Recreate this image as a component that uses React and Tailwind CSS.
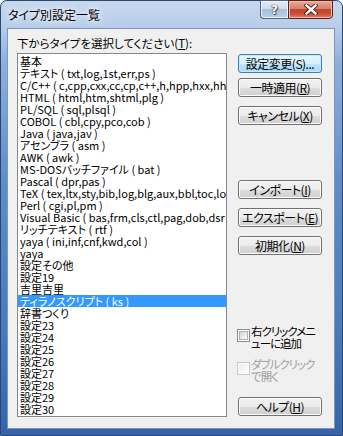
const items = [
  "基本",
  "テキスト ( txt,log,1st,err,ps )",
  "C/C++ ( c,cpp,cxx,cc,cp,c++,h,hpp,hxx,hh,",
  "HTML ( html,htm,shtml,plg )",
  "PL/SQL ( sql,plsql )",
  "COBOL ( cbl,cpy,pco,cob )",
  "Java ( java,jav )",
  "アセンブラ ( asm )",
  "AWK ( awk )",
  "MS-DOSバッチファイル ( bat )",
  "Pascal ( dpr,pas )",
  "TeX ( tex,ltx,sty,bib,log,blg,aux,bbl,toc,lof,",
  "Perl ( cgi,pl,pm )",
  "Visual Basic ( bas,frm,cls,ctl,pag,dob,dsr",
  "リッチテキスト ( rtf )",
  "yaya ( ini,inf,cnf,kwd,col )",
  "yaya",
  "設定その他",
  "設定19",
  "吉里吉里",
  "ティラノスクリプト ( ks )",
  "辞書つくり",
  "設定23",
  "設定24",
  "設定25",
  "設定26",
  "設定27",
  "設定28",
  "設定29",
  "設定30",
];

const SELECTED = 20;

function Btn({ children, className = "", primary = false }) {
  return (
    <div
      className={
        "h-[19px] w-[84px] flex items-center justify-center rounded-[3px] border whitespace-nowrap tracking-[-0.5px] " +
        (primary
          ? "border-[#3c7fb1] bg-[linear-gradient(180deg,#eaf6fd_0%,#d9f0fc_50%,#bee6fd_51%,#a7d9f5_100%)] shadow-[inset_0_0_0_1px_#c4e9fd] "
          : "border-[#707070] bg-[linear-gradient(180deg,#f2f2f2_0%,#ebebeb_50%,#dddddd_51%,#cfcfcf_100%)] shadow-[inset_0_0_0_1px_#fcfcfc] ") +
        className
      }
    >
      {children}
    </div>
  );
}

function Check({ disabled = false, lines, className = "" }) {
  return (
    <div className={"flex items-start ml-[-1px] " + className}>
      <div
        className={
          "mt-[4px] w-[13px] h-[13px] shrink-0 border p-[1px] " +
          (disabled ? "border-[#c8c8c8] bg-[#fafafa]" : "border-[#8e8f8f] bg-white")
        }
      >
        <div
          className={
            "w-full h-full " +
            (disabled
              ? "bg-[linear-gradient(135deg,#eeeeee,#fbfbfb)]"
              : "bg-[linear-gradient(135deg,#d3d3d3,#fbfbfb)] border border-[#b0b0b0]")
          }
        />
      </div>
      <div
        className={
          "ml-[1px] text-[11.5px] leading-[12px] whitespace-nowrap tracking-[-1px] " +
          (disabled ? "text-[#a0a0a0]" : "text-black")
        }
      >
        {lines.map((l) => (
          <div key={l}>{l}</div>
        ))}
      </div>
    </div>
  );
}

export default function App() {
  return (
    <div className="w-[343px] h-[436px] text-[12px] leading-[12px] text-black font-['Noto_Sans_CJK_JP',sans-serif] [font-feature-settings:'palt']">
      <div className="w-full h-full flex flex-col border border-[#2a4870] rounded-t-[7px] bg-[linear-gradient(180deg,#c6d9ef_0px,#b8cdea_26px,#8fb0dc_60px,#5f8dca_180px,#4a7bbf_320px,#3563aa_436px)]">
        {/* タイトルバー */}
        <div className="h-[27px] flex items-start justify-between">
          <div className="pl-[7px] pt-[8px] text-[12px] leading-[12px] [text-shadow:0_0_5px_#ffffff,0_0_8px_#ffffff]">
            タイプ別設定一覧
          </div>
          <div className="flex mr-[9px] mt-[-1px]">
            <div className="w-[28px] h-[19px] flex items-center justify-center rounded-bl-[4px] border border-r-0 border-[#4e6580] bg-[linear-gradient(180deg,#e4ecf6_0%,#cfdcec_45%,#a9bfda_50%,#bcd0e6_100%)] shadow-[inset_0_0_0_1px_#eef3fa]">
              <span className="text-white font-bold text-[12px] leading-[12px] font-['DejaVu_Sans',sans-serif] [text-shadow:0_0_1px_#333,0_0_1px_#333,1px_1px_1px_#555]">
                ?
              </span>
            </div>
            <div className="w-[45px] h-[19px] flex items-center justify-center rounded-br-[4px] border border-[#5a2218] bg-[linear-gradient(180deg,#e8ad9f_0%,#d6806e_45%,#c4432d_50%,#cf4f3a_78%,#e3866a_100%)] shadow-[inset_0_0_0_1px_#f0b9ab]">
              <svg width="14" height="11" viewBox="0 0 14 11">
                <path d="M2.5 1.5 L11.5 9.5 M11.5 1.5 L2.5 9.5" stroke="#4a1a12" strokeWidth="4.2" strokeLinecap="square" />
                <path d="M2.5 1.5 L11.5 9.5 M11.5 1.5 L2.5 9.5" stroke="#ffffff" strokeWidth="2.4" strokeLinecap="square" />
              </svg>
            </div>
          </div>
        </div>

        {/* クライアント領域 */}
        <div className="flex-1 ml-[6px] mr-[7px] mb-[6px] border border-[#7e96b6] bg-[#f0f0f0] flex">
          <div className="pl-[9px] pt-[8px] w-[219px]">
            <div className="whitespace-nowrap text-[11.5px]">
              下からタイプを選択してください(<span className="underline">T</span>):
            </div>
            <div className="mt-[4px] w-[210px] h-[364px] border border-[#828790] bg-white pt-[1px] overflow-hidden text-[11px]">
              {items.map((it, i) => (
                <div
                  key={i}
                  className={
                    "h-[12px] leading-[12px] pl-[2px] whitespace-nowrap " +
                    (i === SELECTED ? "bg-[#3399ff] text-white" : "")
                  }
                >
                  {it}
                </div>
              ))}
            </div>
          </div>

          <div className="ml-[11px] pt-[25px] w-[84px] flex flex-col">
            <Btn primary>設定変更(S)...</Btn>
            <Btn className="mt-[5px]">
              一時適用(<span className="underline">R</span>)
            </Btn>
            <Btn className="mt-[9px]">
              キャンセル(<span className="underline">X</span>)
            </Btn>
            <Btn className="mt-[55px]">
              インポート(<span className="underline">I</span>)
            </Btn>
            <Btn className="mt-[9px]">
              エクスポート(<span className="underline">E</span>)
            </Btn>
            <Btn className="mt-[9px]">
              初期化(<span className="underline">N</span>)
            </Btn>
            <Check className="mt-[70px]" lines={["右クリックメニ", "ューに追加"]} />
            <Check className="mt-[9px]" disabled lines={["ダブルクリック", "で開く"]} />
            <Btn className="mt-[15px]">
              ヘルプ(<span className="underline">H</span>)
            </Btn>
          </div>
        </div>
      </div>
    </div>
  );
}
